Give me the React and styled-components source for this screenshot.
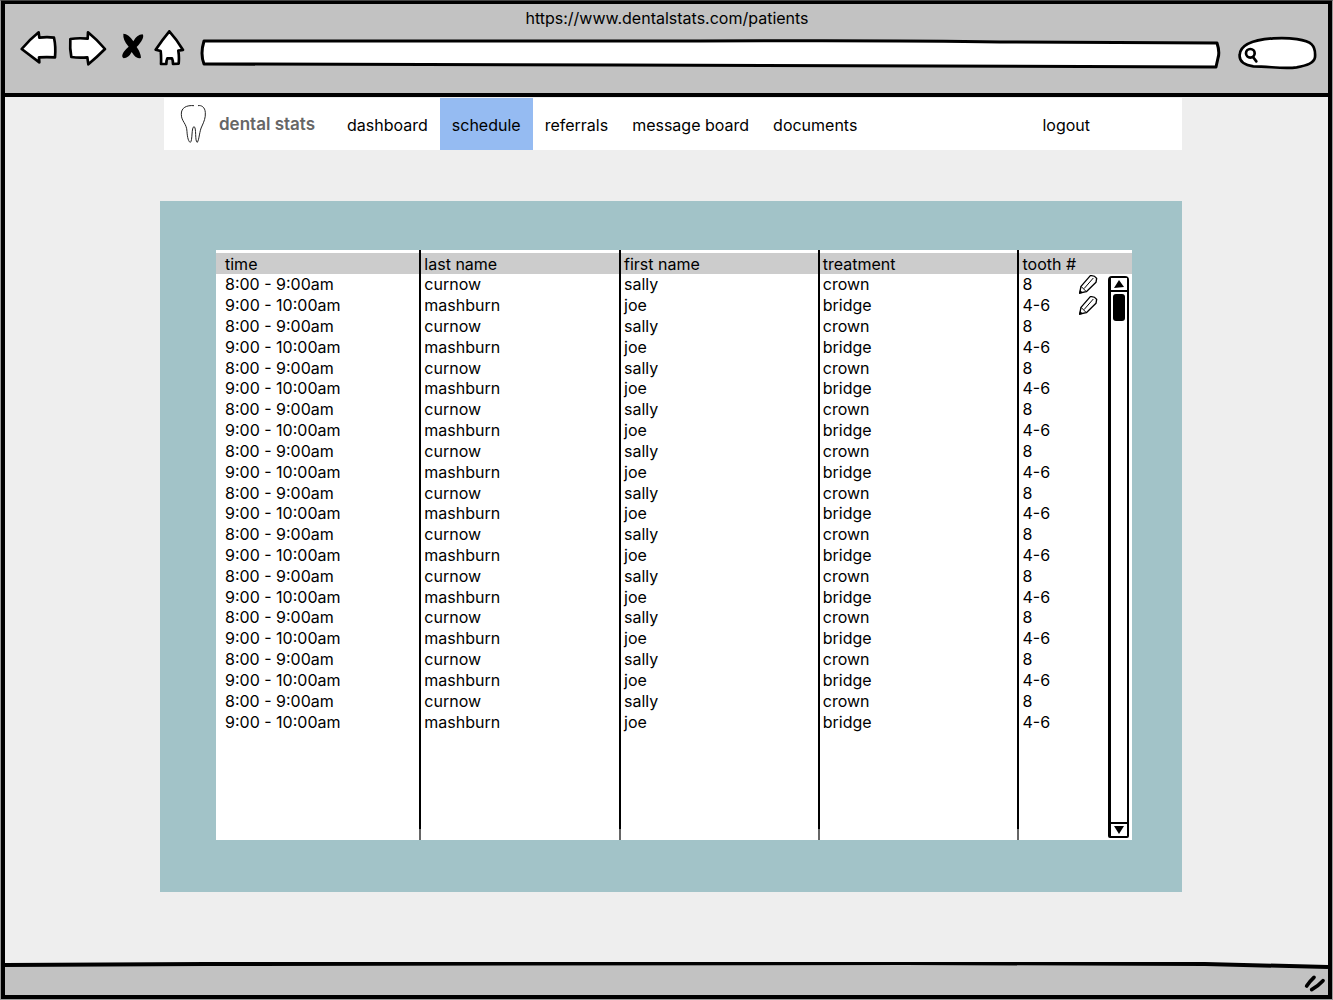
import React from 'react';
import styled, { createGlobalStyle } from 'styled-components';

const INK = '#000';
const CHROME = '#c2c2c2';
const PAGE = '#eee';

const GlobalStyle = createGlobalStyle`
  * { box-sizing: border-box; }
  body {
    margin: 0;
    background: #ddd;
    color: ${INK};
    font-family: Inter, Roboto, sans-serif;
    font-size: 16px;
    line-height: 20px;
  }
  button, input { font: inherit; color: inherit; }
`;

const Window = styled.div`
  display: flex;
  flex-direction: column;
  min-height: 100vh;
  border: 1px solid #999;
  border-top-color: #444;
`;

const Frame = styled.div`
  flex: 1;
  display: flex;
  flex-direction: column;
  border: 4px solid ${INK};
  border-top-width: 3px;
  background: ${PAGE};
`;

const BrowserHeader = styled.header`
  background: ${CHROME};
  border-bottom: 4px solid ${INK};
  padding: 4px 11px 23px 12px;
`;

const PageTitle = styled.div`
  text-align: center;
  padding-bottom: 2px;
`;

const Toolbar = styled.div`
  display: flex;
  gap: 11px;
`;

const ToolGroup = styled.div`
  display: flex;
  gap: 4px;
`;

const IconButton = styled.button`
  display: block;
  padding: 0;
  border: 0;
  background: none;
  cursor: pointer;
  svg { display: block; }
`;

const Field = styled.label`
  position: relative;
  display: block;
  height: 40px;
  ${(p) => (p.$grow ? 'flex: 1; margin-right: 6px;' : 'width: 80px;')}
`;

const FieldOutline = styled.svg`
  position: absolute;
  inset: 0;
  width: 100%;
  height: 100%;
  overflow: visible;
`;

const FieldInput = styled.input`
  position: relative;
  width: 100%;
  height: 100%;
  border: 0;
  outline: 0;
  background: transparent;
  padding: 6px 12px 0 ${(p) => (p.$inset ? '24px' : '12px')};
`;

const Main = styled.main`
  flex: 1;
  padding: 1px 146px 70px 155px;
`;

const NavBar = styled.nav`
  display: flex;
  align-items: center;
  margin-left: 4px;
  padding-left: 15px;
  background: #fff;
`;

const Brand = styled.a`
  display: flex;
  align-items: center;
  gap: 12px;
  margin-right: 20px;
  color: #666;
  font-size: 17px;
  font-weight: 600;
  text-decoration: none;
`;

const NavLink = styled.a`
  padding: 17px 12px 15px;
  color: ${INK};
  text-decoration: none;
  background: ${(p) => (p.$active ? '#95bbf2' : 'transparent')};
  ${(p) => p.$end && 'margin-left: auto; margin-right: 80px;'}
`;

const Panel = styled.section`
  margin-top: 51px;
  padding: 49px 50px 52px 56px;
  background: #a2c3c8;
`;

const Card = styled.div`
  position: relative;
  background: #fff;
`;

const Table = styled.table`
  width: 100%;
  height: 590px;
  table-layout: fixed;
  border-collapse: separate;
  border-spacing: 0;
`;

const Col = styled.col`
  width: ${(p) => p.$width};
`;

const HeadCell = styled.th`
  padding: 4px 3px 0;
  text-align: left;
  font-weight: 400;
  background: linear-gradient(#fff 3px, #ccc 3px);
  border-left: 2px solid ${INK};
  &:first-child { border-left: 0; padding-left: 9px; }
`;

const Rows = styled.tbody`
  height: 458px;
`;

const Cell = styled.td`
  padding: 0 3px;
  border-left: 2px solid ${(p) => (p.$faded ? '#666' : INK)};
  ${(p) => p.$faded && 'height: 11px;'}
  &:first-child { border-left: 0; padding-left: 9px; }
`;

const ToothCell = styled.div`
  display: flex;
  justify-content: space-between;
  padding-right: 31px;
`;

const ScrollBar = styled.div`
  position: absolute;
  top: 26px;
  right: 3px;
  bottom: 2px;
  width: 21px;
  display: flex;
  flex-direction: column;
  border: 2px solid ${INK};
  border-left-width: 3px;
  border-radius: 4px 4px 2px 2px;
  background: #fff;
`;

const ScrollButton = styled.button`
  display: flex;
  justify-content: center;
  align-items: center;
  height: 14px;
  padding: 0;
  border: 0 solid ${INK};
  ${(p) => (p.$down ? 'border-top-width: 2px;' : 'border-bottom-width: 2px;')}
  background: #fff;
`;

const Track = styled.div`
  flex: 1;
  padding: 2px 2px 0;
`;

const Thumb = styled.div`
  height: 27px;
  border-radius: 3px;
  background: ${INK};
`;

const StatusBar = styled.footer`
  position: relative;
  display: flex;
  justify-content: flex-end;
  align-items: flex-end;
  height: 33px;
  padding: 0 1px 2px;
`;

const StatusShape = styled.svg`
  position: absolute;
  inset: 0;
  width: 100%;
  height: 100%;
`;

const Grip = styled.svg`
  position: relative;
`;

const ink = { fill: '#fff', stroke: INK, strokeWidth: 8, strokeLinejoin: 'round', strokeLinecap: 'round' };

const BackIcon = () => (
  <svg width="44" height="40" viewBox="51 90 132 120" {...ink}>
    <path d="M65 147 Q90 118 116 97 L118 113 Q142 110 162 113 Q168 140 165 172 Q140 171 117 172 L118 187 Q90 166 65 147Z" />
  </svg>
);

const ForwardIcon = () => (
  <svg width="44" height="40" viewBox="195 90 132 120" {...ink}>
    <path d="M211 117 Q236 113 263 116 L264 97 Q292 120 315 147 Q292 170 265 193 L262 172 Q236 174 214 171 Q209 146 211 117Z" />
  </svg>
);

const StopIcon = () => (
  <svg width="36" height="40" viewBox="339 90 108 120" fill={INK}>
    <path d="M370 101 Q386 101 400 124 Q410 104 428 103 Q433 109 424 124 Q416 136 410 141 Q422 158 423 173 Q410 180 395 156 Q386 174 371 175 Q362 170 371 156 Q378 146 386 140 Q368 120 370 101Z" />
  </svg>
);

const HomeIcon = () => (
  <svg width="36" height="40" viewBox="459 90 108 120" {...ink}>
    <path d="M508 94 Q488 118 467 149 L482 153 Q484 170 483 192 L499 192 Q499 182 502 175 L516 175 Q519 182 519 192 L536 191 Q538 170 535 152 L549 150 Q530 118 508 94Z" />
  </svg>
);

const ToothIcon = () => (
  <svg width="28" height="42" viewBox="537 306 84 126" fill="none" stroke="#222" strokeWidth="3">
    <path d="M582 314 C560 312 543 320 544 340 C544 362 560 366 561 392 C562 410 566 423 571 424 C578 420 574 377 582 377 C590 377 584 424 592 424 C598 415 598 390 606 375 C612 362 617 350 616 335 C615 318 604 312 594 314" />
  </svg>
);

const PencilIcon = () => (
  <svg width="20" height="20" viewBox="294 100 60 60" fill="#fff" stroke={INK} strokeWidth="4" strokeLinejoin="round">
    <path d="M299 157 L303 137 L331 105 Q343 103 350 113 L348 125 L319 153Z" />
    <path d="M303 137 L319 153 M312 144 L340 112" fill="none" strokeWidth="3" />
    <path d="M297 160 L300 148 L309 156Z" fill={INK} stroke="none" />
  </svg>
);

const links = ['dashboard', 'schedule', 'referrals', 'message board', 'documents'];
const columns = ['time', 'last name', 'first name', 'treatment', 'tooth #'];
const appointments = Array.from({ length: 22 }, (_, i) =>
  i % 2 === 0
    ? ['8:00 - 9:00am', 'curnow', 'sally', 'crown', '8']
    : ['9:00 - 10:00am', 'mashburn', 'joe', 'bridge', '4-6']
);

export default function App() {
  return (
    <Window>
      <GlobalStyle />
      <Frame>
        <BrowserHeader>
          <PageTitle>https://www.dentalstats.com/patients</PageTitle>
          <Toolbar>
            <ToolGroup>
              <IconButton aria-label="Back"><BackIcon /></IconButton>
              <IconButton aria-label="Forward"><ForwardIcon /></IconButton>
              <IconButton aria-label="Stop"><StopIcon /></IconButton>
              <IconButton aria-label="Home"><HomeIcon /></IconButton>
            </ToolGroup>
            <Field $grow>
              <FieldOutline viewBox="0 0 1020 40" preserveAspectRatio="none" aria-hidden="true">
                <path
                  d="M4 11 L500 11 Q700 10 800 12 L1017 13 Q1020 22 1018 28 L1016 37 Q700 37 420 35 L4 34 Q0 24 4 11Z"
                  fill="#fff" stroke={INK} strokeWidth="3" strokeLinejoin="round" vectorEffect="non-scaling-stroke"
                />
              </FieldOutline>
              <FieldInput type="text" aria-label="Address" />
            </Field>
            <Field>
              <FieldOutline viewBox="291 90 240 120" aria-hidden="true" {...ink}>
                <path d="M299 165 C300 140 330 120 400 115 C450 112 500 118 515 133 C525 143 526 160 525 172 C522 190 500 196 470 202 C430 208 390 199 340 199 C315 196 297 185 299 165Z" />
                <circle cx="331" cy="160" r="13" />
                <path d="M339 171 L349 184" />
              </FieldOutline>
              <FieldInput $inset type="text" aria-label="Search" />
            </Field>
          </Toolbar>
        </BrowserHeader>

        <Main>
          <NavBar>
            <Brand href="#home"><ToothIcon />dental stats</Brand>
            {links.map((label) => (
              <NavLink key={label} href="#" $active={label === 'schedule'}>{label}</NavLink>
            ))}
            <NavLink href="#" $end>logout</NavLink>
          </NavBar>

          <Panel>
            <Card>
              <Table>
                <colgroup>
                  <Col $width="22.2%" />
                  <Col $width="21.8%" />
                  <Col $width="21.7%" />
                  <Col $width="21.8%" />
                  <Col />
                </colgroup>
                <thead>
                  <tr>{columns.map((c) => <HeadCell key={c} scope="col">{c}</HeadCell>)}</tr>
                </thead>
                <Rows>
                  {appointments.map((row, i) => (
                    <tr key={i}>
                      {row.slice(0, 4).map((v) => <Cell key={v}>{v}</Cell>)}
                      <Cell>
                        <ToothCell>
                          {row[4]}
                          {i < 2 && <IconButton aria-label="Edit"><PencilIcon /></IconButton>}
                        </ToothCell>
                      </Cell>
                    </tr>
                  ))}
                </Rows>
                <tbody aria-hidden="true">
                  <tr>{columns.map((c) => <Cell key={c} />)}</tr>
                  <tr>{columns.map((c) => <Cell key={c} $faded />)}</tr>
                </tbody>
              </Table>
              <ScrollBar>
                <ScrollButton aria-label="Scroll up">
                  <svg width="10" height="8" viewBox="0 0 10 8"><path d="M5 0 L10 7 L0 8Z" /></svg>
                </ScrollButton>
                <Track><Thumb /></Track>
                <ScrollButton $down aria-label="Scroll down">
                  <svg width="10" height="8" viewBox="0 0 10 8"><path d="M0 0 L10 0 L5 8Z" /></svg>
                </ScrollButton>
              </ScrollBar>
            </Card>
          </Panel>
        </Main>

        <StatusBar>
          <StatusShape viewBox="0 0 1323 33" preserveAspectRatio="none" aria-hidden="true">
            <path d="M0 3 L900 1 L1200 2 L1323 5 L1323 33 L0 33Z" fill={CHROME} />
            <path d="M0 3 L200 2 L900 1 L1200 2 L1323 5" fill="none" stroke={INK} strokeWidth="4" />
          </StatusShape>
          <Grip width="24" height="20" viewBox="369 99 72 60" fill="none" stroke={INK} strokeWidth="11" strokeLinecap="round" aria-hidden="true">
            <path d="M380 138 Q389 124 402 112 M395 149 Q413 139 429 122" />
          </Grip>
        </StatusBar>
      </Frame>
    </Window>
  );
}
